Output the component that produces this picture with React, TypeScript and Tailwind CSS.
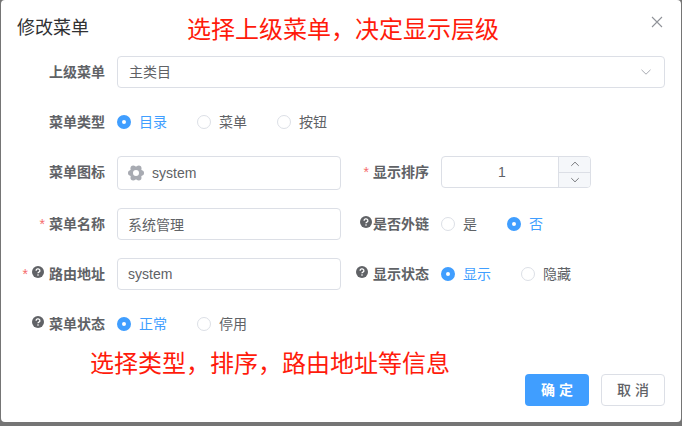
import { useState } from "react";
import type { ReactNode } from "react";

function HelpIcon() {
  return (
    <svg className="w-3 h-3 shrink-0 -translate-y-0.5" viewBox="0 0 12 12" role="img" aria-label="help">
      <circle cx="6" cy="6" r="6" fill="#606266" />
      <path d="M4.1 4.7a1.9 1.7 0 1 1 2.8 1.4c-.6.35-.9.6-.9 1.2" fill="none" stroke="#fff" strokeWidth="1.3" />
      <circle cx="6" cy="9" r=".8" fill="#fff" />
    </svg>
  );
}

function GearIcon() {
  return (
    <svg className="w-4 h-4 shrink-0" viewBox="0 0 16 16">
      <g fill="#a8abb2">
        <circle cx="13.3" cy="8" r="2.7" />
        <circle cx="10.8" cy="3.2" r="2.7" />
        <circle cx="5.2" cy="3.2" r="2.7" />
        <circle cx="2.7" cy="8" r="2.7" />
        <circle cx="5.2" cy="12.8" r="2.7" />
        <circle cx="10.8" cy="12.8" r="2.7" />
      </g>
      <circle cx="8" cy="8" r="4.7" fill="#fff" stroke="#a8abb2" strokeWidth="3.4" />
    </svg>
  );
}

function Chevron({ className, up }: { className: string; up?: boolean }) {
  return (
    <svg className={className} viewBox="0 0 12 12" fill="none" stroke="currentColor" strokeWidth="1">
      <path d={up ? "M1.5 8.2 6 3.8l4.5 4.4" : "M1.5 3.8 6 8.2l4.5-4.4"} />
    </svg>
  );
}

type FieldProps = {
  label: string;
  id?: string;
  required?: boolean;
  help?: boolean;
  tight?: boolean;
  full?: boolean;
  children: ReactNode;
};

function FormItem({ label, id, required, help, tight, full, children }: FieldProps) {
  const labelClass = "w-[100px] shrink-0 h-8 pr-3 flex items-center justify-end font-bold whitespace-nowrap";
  const content = (
    <>
      {required && <span className="mr-1 font-normal text-[#f56c6c]">*</span>}
      {help && <HelpIcon />}
      <span className={help ? (tight ? "ml-px" : "ml-[5px]") : ""}>{label}</span>
    </>
  );

  return (
    <div className={`flex items-start ${full ? "col-span-2" : ""}`}>
      {id ? (
        <label htmlFor={id} className={labelClass}>{content}</label>
      ) : (
        <div className={labelClass}>{content}</div>
      )}
      <div className="flex-1 min-w-0">{children}</div>
    </div>
  );
}

function RadioGroup({ name, options, initial }: { name: string; options: string[]; initial: string }) {
  const [value, setValue] = useState(initial);
  return (
    <div role="radiogroup" aria-label={name} className="flex h-8 items-center gap-[30px]">
      {options.map((option) => (
        <label
          key={option}
          className={`flex items-center gap-2 cursor-pointer whitespace-nowrap ${value === option ? "text-[#409eff]" : ""}`}
        >
          <input
            type="radio"
            name={name}
            checked={value === option}
            onChange={() => setValue(option)}
            className="appearance-none w-3.5 h-3.5 rounded-full border border-[#dcdfe6] bg-white checked:border-5 checked:border-[#409eff]"
          />
          {option}
        </label>
      ))}
    </div>
  );
}

const inputClass = "block w-full h-8 px-[10px] rounded border border-[#dcdfe6] bg-white outline-none focus:border-[#409eff]";

export default function App() {
  const [icon, setIcon] = useState("system");
  const [order, setOrder] = useState(1);
  const [menuName, setMenuName] = useState("系统管理");
  const [path, setPath] = useState("system");

  return (
    <div className="min-h-screen bg-[#757575] px-px pb-1 text-sm text-[#606266] font-['Liberation_Sans','Noto_Sans_CJK_SC',sans-serif]">
      <div role="dialog" aria-labelledby="dialog-title" className="relative rounded bg-white px-4 pb-4">
        <header className="flex items-start justify-between py-4">
          <h2 id="dialog-title" className="text-lg leading-6 text-[#303133]">修改菜单</h2>
          <button type="button" aria-label="关闭" className="cursor-pointer text-[#909399]">
            <svg className="w-4 h-3" viewBox="0 0 16 12" fill="none" stroke="currentColor" strokeWidth="1.1">
              <path d="m3 1 10 10M13 1 3 11" />
            </svg>
          </button>
        </header>

        <form onSubmit={(e) => e.preventDefault()}>
          <div className="grid grid-cols-2 gap-y-[18px]">
            <FormItem label="上级菜单" id="parent" full>
              <div className="relative">
                <select id="parent" className="appearance-none block w-full h-8 px-[11px] rounded border border-[#dcdfe6] bg-white outline-none">
                  <option>主类目</option>
                </select>
                <Chevron className="absolute right-3 top-2.5 w-3.5 h-3 text-[#a8abb2] pointer-events-none" />
              </div>
            </FormItem>

            <FormItem label="菜单类型" full>
              <RadioGroup name="菜单类型" options={["目录", "菜单", "按钮"]} initial="目录" />
            </FormItem>

            <FormItem label="菜单图标" id="icon">
              <div className="flex h-[34px] items-center gap-2 px-[10px] rounded border border-[#dcdfe6] focus-within:border-[#409eff]">
                <GearIcon />
                <input id="icon" value={icon} onChange={(e) => setIcon(e.target.value)} className="flex-1 min-w-0 outline-none" />
              </div>
            </FormItem>

            <FormItem label="显示排序" id="order" required>
              <div className="flex h-8 w-[150px] overflow-hidden rounded border border-[#dcdfe6]">
                <input
                  id="order"
                  type="number"
                  value={order}
                  onChange={(e) => setOrder(Number(e.target.value))}
                  className="flex-1 min-w-0 pl-1 text-center outline-none [appearance:textfield] [&::-webkit-inner-spin-button]:appearance-none"
                />
                <div className="flex w-8 flex-col border-l border-[#dcdfe6] bg-[#f5f7fa] text-[#606266]">
                  <button
                    type="button"
                    aria-label="增加"
                    onClick={() => setOrder(order + 1)}
                    className="flex flex-1 items-center justify-center border-b border-[#dcdfe6] cursor-pointer"
                  >
                    <Chevron up className="w-2.5 h-2.5" />
                  </button>
                  <button
                    type="button"
                    aria-label="减少"
                    onClick={() => setOrder(Math.max(0, order - 1))}
                    className="flex flex-1 items-center justify-center cursor-pointer"
                  >
                    <Chevron className="w-2.5 h-2.5" />
                  </button>
                </div>
              </div>
            </FormItem>

            <FormItem label="菜单名称" id="menu-name" required>
              <input id="menu-name" value={menuName} onChange={(e) => setMenuName(e.target.value)} className={inputClass} />
            </FormItem>

            <FormItem label="是否外链" help tight>
              <RadioGroup name="是否外链" options={["是", "否"]} initial="否" />
            </FormItem>

            <FormItem label="路由地址" id="path" required help>
              <input id="path" value={path} onChange={(e) => setPath(e.target.value)} className={inputClass} />
            </FormItem>

            <FormItem label="显示状态" help>
              <RadioGroup name="显示状态" options={["显示", "隐藏"]} initial="显示" />
            </FormItem>

            <FormItem label="菜单状态" help full>
              <RadioGroup name="菜单状态" options={["正常", "停用"]} initial="正常" />
            </FormItem>
          </div>

          <footer className="mt-[34px] flex justify-end gap-3">
            <button type="submit" className="h-8 w-16 rounded bg-[#409eff] font-bold text-white cursor-pointer">
              确 定
            </button>
            <button type="button" className="h-8 w-16 rounded border border-[#dcdfe6] bg-white font-medium cursor-pointer">
              取 消
            </button>
          </footer>
        </form>

        {/* notes written over the dialog */}
        <p className="absolute left-[186px] top-3 text-2xl leading-9 whitespace-nowrap text-[#ff1b0b] pointer-events-none">
          选择上级菜单，决定显示层级
        </p>
        <p className="absolute left-[89px] bottom-10 text-2xl leading-9 whitespace-nowrap text-[#ff1b0b] pointer-events-none">
          选择类型，排序，路由地址等信息
        </p>
      </div>
    </div>
  );
}
